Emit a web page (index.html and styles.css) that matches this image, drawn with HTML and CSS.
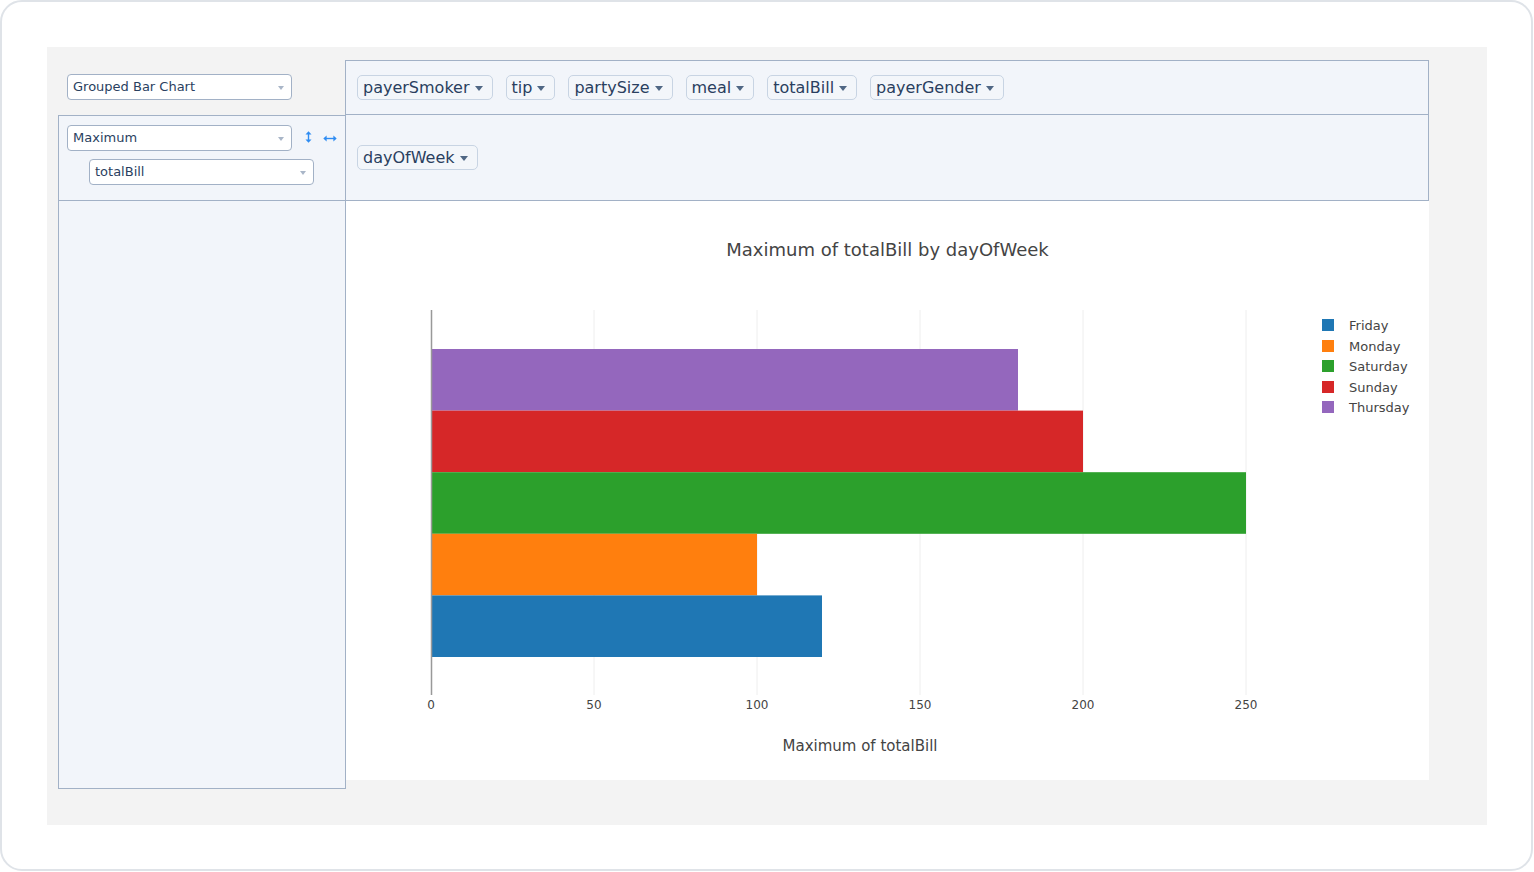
FILE: index.html
```html
<!DOCTYPE html>
<html lang="en">
<head>
<meta charset="utf-8">
<title>Pivot Table</title>
<link rel="stylesheet" href="styles.css">
</head>
<body>
<div class="frame">
  <div class="canvas">
    <div class="pvt">
      <div class="cell renderers">
        <div class="dd dd-wide">Grouped Bar Chart<span class="caret"></span></div>
      </div>
      <div class="cell axis unused">
        <span class="attr">payerSmoker<span class="tri"></span></span>
        <span class="attr">tip<span class="tri"></span></span>
        <span class="attr">partySize<span class="tri"></span></span>
        <span class="attr">meal<span class="tri"></span></span>
        <span class="attr">totalBill<span class="tri"></span></span>
        <span class="attr">payerGender<span class="tri"></span></span>
      </div>
      <div class="cell vals">
        <div class="agg-row">
          <div class="dd dd-wide">Maximum<span class="caret"></span></div>
          <svg class="order order-v" width="7" height="12" viewBox="0 0 7 12"><path d="M3.5 2 V10" stroke="#2f8cf2" stroke-width="1.4"/><polygon points="0.5,3.6 3.5,0.3 6.5,3.6" fill="#2f8cf2"/><polygon points="0.5,8.4 3.5,11.7 6.5,8.4" fill="#2f8cf2"/></svg>
          <svg class="order order-h" width="14" height="7" viewBox="0 0 14 7"><path d="M2 3.5 H12" stroke="#2f8cf2" stroke-width="1.4"/><polygon points="3.6,0.5 0.3,3.5 3.6,6.5" fill="#2f8cf2"/><polygon points="10.4,0.5 13.7,3.5 10.4,6.5" fill="#2f8cf2"/></svg>
        </div>
        <div class="dd dd-wide dd-sub">totalBill<span class="caret"></span></div>
      </div>
      <div class="cell axis cols">
        <span class="attr">dayOfWeek<span class="tri"></span></span>
      </div>
      <div class="cell rows"></div>
      <div class="output">
        <svg class="chart" width="1083" height="579" viewBox="0 0 1083 579">
          <text class="title" x="541.5" y="55" text-anchor="middle">Maximum of totalBill by dayOfWeek</text>
          <g class="grid">
            <line x1="248" y1="109" x2="248" y2="494"/>
            <line x1="411" y1="109" x2="411" y2="494"/>
            <line x1="574" y1="109" x2="574" y2="494"/>
            <line x1="737" y1="109" x2="737" y2="494"/>
            <line x1="900" y1="109" x2="900" y2="494"/>
          </g>
          <rect x="85" y="148" width="587" height="61.6" fill="#9467bd"/>
          <rect x="85" y="209.6" width="652" height="61.6" fill="#d62728"/>
          <rect x="85" y="271.2" width="815" height="61.6" fill="#2ca02c"/>
          <rect x="85" y="332.8" width="326" height="61.6" fill="#ff7f0e"/>
          <rect x="85" y="394.4" width="391" height="61.6" fill="#1f77b4"/>
          <line class="zero" x1="85.5" y1="109" x2="85.5" y2="494"/>
          <g class="ticks" text-anchor="middle">
            <text x="85" y="507.5">0</text>
            <text x="248" y="507.5">50</text>
            <text x="411" y="507.5">100</text>
            <text x="574" y="507.5">150</text>
            <text x="737" y="507.5">200</text>
            <text x="900" y="507.5">250</text>
          </g>
          <text class="axis-title" x="514" y="549.5" text-anchor="middle">Maximum of totalBill</text>
          <g class="legend">
            <rect x="976" y="118" width="12" height="12" fill="#1f77b4"/>
            <text x="1003" y="128.5">Friday</text>
            <rect x="976" y="139" width="12" height="12" fill="#ff7f0e"/>
            <text x="1003" y="149.5">Monday</text>
            <rect x="976" y="159" width="12" height="12" fill="#2ca02c"/>
            <text x="1003" y="169.5">Saturday</text>
            <rect x="976" y="180" width="12" height="12" fill="#d62728"/>
            <text x="1003" y="190.5">Sunday</text>
            <rect x="976" y="200" width="12" height="12" fill="#9467bd"/>
            <text x="1003" y="210.5">Thursday</text>
          </g>
        </svg>
      </div>
    </div>
  </div>
</div>
</body>
</html>
```

FILE: styles.css
```css
html, body {
  margin: 0;
  padding: 0;
  background: #ffffff;
}

body {
  font-family: "DejaVu Sans", Verdana, sans-serif;
  color: #2a3f5f;
}

.frame {
  box-sizing: border-box;
  width: 1533px;
  height: 871px;
  border: 2px solid #dfe3e8;
  border-radius: 22px;
  padding: 45px;
  background: #ffffff;
}

.canvas {
  width: 1440px;
  height: 778px;
  background: #f3f3f3;
  padding: 13px 0 0 11px;
  box-sizing: border-box;
}

.pvt {
  display: grid;
  grid-template-columns: 287px 1084px;
  grid-template-rows: 55px 86px auto;
}

.cell {
  box-sizing: border-box;
}

.renderers {
  padding: 14px 0 0 9px;
}

.axis {
  background: #f2f5fa;
  display: flex;
  align-items: center;
  gap: 13px;
  padding-left: 11px;
}

.unused {
  border: 1px solid #a2b1c6;
}

.cols {
  border-left: 1px solid #a2b1c6;
  border-right: 1px solid #a2b1c6;
  border-bottom: 1px solid #a2b1c6;
}

.vals {
  background: #f2f5fa;
  border-left: 1px solid #a2b1c6;
  border-top: 1px solid #a2b1c6;
  border-bottom: 1px solid #a2b1c6;
  padding: 9px 0 0 8px;
}

.rows {
  background: #f2f5fa;
  border-left: 1px solid #a2b1c6;
  border-right: 1px solid #a2b1c6;
  border-bottom: 1px solid #a2b1c6;
  margin-right: -1px;
  min-height: 588px;
}

.output {
  margin-left: 1px;
  width: 1083px;
  height: 579px;
  background: #ffffff;
  align-self: start;
}

.chart {
  display: block;
}

.attr {
  display: inline-flex;
  align-items: center;
  box-sizing: border-box;
  height: 25px;
  padding: 0 0 0 5px;
  background: #f3f6fa;
  border: 1px solid #c8d4e3;
  border-radius: 5px;
  font-size: 16px;
  line-height: 19px;
  color: #2a3f5f;
  white-space: nowrap;
}

.tri {
  display: inline-block;
  width: 0;
  height: 0;
  border-left: 4px solid transparent;
  border-right: 4px solid transparent;
  border-top: 5px solid #506784;
  margin: 2px 9px 0 5px;
}

.dd {
  position: relative;
  box-sizing: border-box;
  height: 26px;
  background: #ffffff;
  border: 1px solid #a2b1c6;
  border-radius: 4px;
  font-size: 13px;
  line-height: 24px;
  padding-left: 5px;
  color: #2a3f5f;
}

.dd-wide {
  width: 225px;
}

.caret {
  position: absolute;
  right: 7px;
  top: 11px;
  width: 0;
  height: 0;
  border-left: 3.5px solid transparent;
  border-right: 3.5px solid transparent;
  border-top: 4px solid #a9b6c8;
}

.agg-row {
  display: flex;
  align-items: center;
}

.order {
  display: block;
}

.order-v {
  margin-left: 13px;
  margin-top: -3px;
}

.order-h {
  margin-left: 11px;
}

.dd-sub {
  margin: 8px 0 0 22px;
}

.title {
  font-family: "DejaVu Sans", Verdana, sans-serif;
  font-size: 18px;
  fill: #444444;
}

.grid line {
  stroke: #eeeeee;
  stroke-width: 1;
}

.zero {
  stroke: #999999;
  stroke-width: 1.5;
}

.ticks text {
  font-family: "DejaVu Sans", Verdana, sans-serif;
  font-size: 12px;
  fill: #444444;
}

.axis-title {
  font-family: "DejaVu Sans", Verdana, sans-serif;
  font-size: 15px;
  fill: #444444;
}

.legend text {
  font-family: "DejaVu Sans", Verdana, sans-serif;
  font-size: 13px;
  fill: #444444;
}
```
